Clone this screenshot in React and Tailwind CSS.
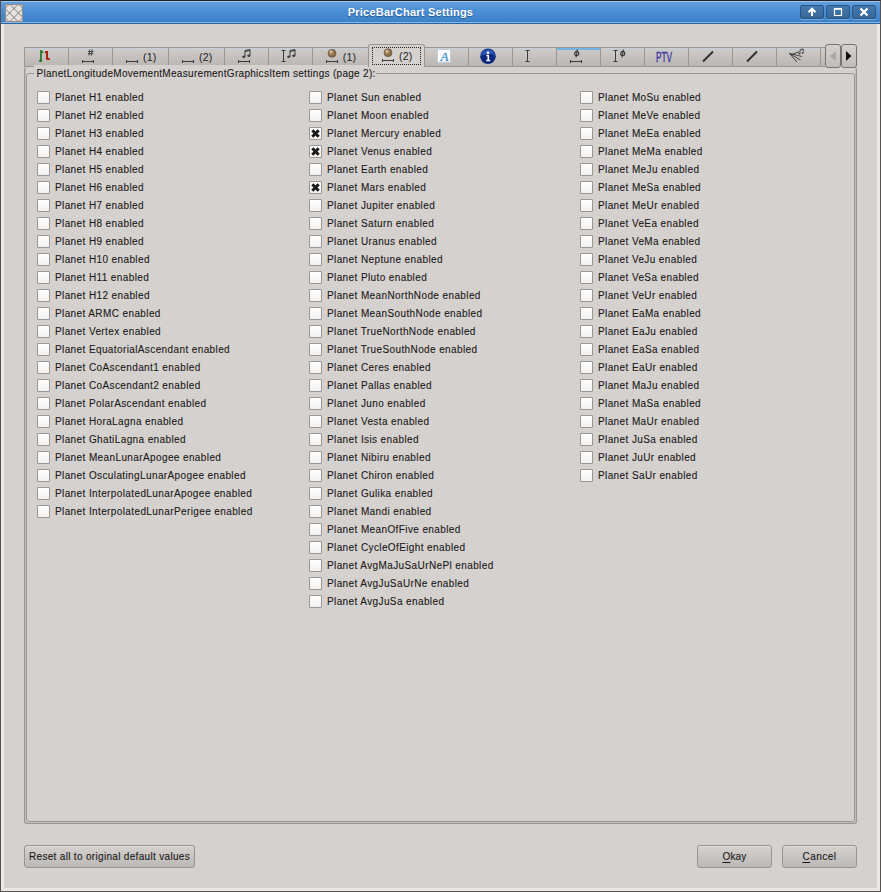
import React from 'react';

const planetColumns = [
  ['H1', 'H2', 'H3', 'H4', 'H5', 'H6', 'H7', 'H8', 'H9', 'H10', 'H11', 'H12', 'ARMC', 'Vertex', 'EquatorialAscendant', 'CoAscendant1', 'CoAscendant2', 'PolarAscendant', 'HoraLagna', 'GhatiLagna', 'MeanLunarApogee', 'OsculatingLunarApogee', 'InterpolatedLunarApogee', 'InterpolatedLunarPerigee'],
  ['Sun', 'Moon', 'Mercury', 'Venus', 'Earth', 'Mars', 'Jupiter', 'Saturn', 'Uranus', 'Neptune', 'Pluto', 'MeanNorthNode', 'MeanSouthNode', 'TrueNorthNode', 'TrueSouthNode', 'Ceres', 'Pallas', 'Juno', 'Vesta', 'Isis', 'Nibiru', 'Chiron', 'Gulika', 'Mandi', 'MeanOfFive', 'CycleOfEight', 'AvgMaJuSaUrNePl', 'AvgJuSaUrNe', 'AvgJuSa'],
  ['MoSu', 'MeVe', 'MeEa', 'MeMa', 'MeJu', 'MeSa', 'MeUr', 'VeEa', 'VeMa', 'VeJu', 'VeSa', 'VeUr', 'EaMa', 'EaJu', 'EaSa', 'EaUr', 'MaJu', 'MaSa', 'MaUr', 'JuSa', 'JuUr', 'SaUr'],
];

const enabledPlanets = new Set(['Mercury', 'Venus', 'Mars']);

function PlanetRow({ name }) {
  return (
    <label className="flex h-[18px] items-center whitespace-nowrap">
      <span className="mb-[2px] flex size-[13px] shrink-0 items-center justify-center rounded-[1px] border border-[#9a9693] bg-linear-to-b from-white to-[#f1f0ef]">
        {enabledPlanets.has(name) && (
          <svg width="11" height="11" viewBox="0 0 11 11" className="shrink-0">
            <path d="M2.3 2.3L8.7 8.7M8.7 2.3L2.3 8.7" stroke="#1c1b1a" strokeWidth="3" />
          </svg>
        )}
      </span>
      <span className="ml-[5px]">Planet {name} enabled</span>
    </label>
  );
}

const ink = '#3c3b3a';

function Measure({ x = 13, y = 13.5 }) {
  return <path d={`M${x + 0.5} ${y - 1.5}v3M${x + 11.5} ${y - 1.5}v3M${x} ${y}h12`} stroke={ink} strokeWidth="1" fill="none" />;
}

function Notes({ x, y }) {
  return (
    <g transform={`translate(${x} ${y})`} fill={ink} stroke={ink}>
      <path d="M2.5 7.5V1.5L7.5 .5V6.5M2.5 2.5L7.5 1.5" fill="none" />
      <ellipse cx="1.3" cy="7.8" rx="1.2" ry=".8" />
      <ellipse cx="6.3" cy="6.8" rx="1.2" ry=".8" />
    </g>
  );
}

function IBeam({ x }) {
  return <path d={`M${x - 1.5} 2.5h4M${x - 1.5} 13.5h4M${x + 0.5} 2.5v11`} stroke={ink} strokeWidth="1" fill="none" />;
}

function Phi({ x, y }) {
  return (
    <g fill="none" stroke={ink}>
      <ellipse cx={x} cy={y} rx="2" ry="2.2" strokeWidth="1.2" />
      <path d={`M${x + 0.7} ${y - 4}L${x - 0.7} ${y + 4}`} strokeWidth="1.1" />
    </g>
  );
}

function Planet({ x, y }) {
  return (
    <g>
      <circle cx={x} cy={y} r="4" fill="#806446" stroke="#66543f" strokeWidth=".6" />
      <circle cx={x - 0.6} cy={y - 0.6} r="2.7" fill="#a58359" />
      <circle cx={x - 1} cy={y - 1.5} r="1.2" fill="#dcc9a8" />
    </g>
  );
}

function PageNumber({ x, y = 12.5, n }) {
  return <text x={x} y={y} fontSize="10.5" letterSpacing=".2" fill="#222">({n})</text>;
}

const tabs = [
  { w: 44, art: <><path d="M16 2v12M14 12.7h2M16 4h2.5" stroke="#17701d" strokeWidth="1.6" fill="none" /><path d="M22 3v8.5M20 4.2h2M22 11h2.7" stroke="#ad2014" strokeWidth="2" fill="none" /></> },
  { w: 44, art: <><path d="M20.8 1.5l-.8 6M23.2 1.5l-.8 6M19 3.5h5.5M18.8 5.7h5.5" stroke={ink} strokeWidth=".9" /><Measure /></> },
  { w: 56, art: <><Measure /><PageNumber x={30} n={1} /></> },
  { w: 56, art: <><Measure /><PageNumber x={30} n={2} /></> },
  { w: 44, art: <><Notes x={17.5} y={1} /><Measure /></> },
  { w: 44, art: <><IBeam x={14} /><Notes x={18.5} y={1} /></> },
  { w: 56, art: <><Planet x={19} y={5.3} /><Measure /><PageNumber x={29.8} n={1} /></> },
  { w: 56, selected: true },
  { w: 45, art: <><rect x="13.5" y="1.5" width="13" height="13" fill="#fbfcfd" stroke="#c6ccd2" /><text x="16.5" y="12.7" fontFamily="Liberation Serif, serif" fontStyle="italic" fontSize="13" fill="#4b93cb" stroke="#4b93cb" strokeWidth=".3">A</text></> },
  { w: 44, art: <><circle cx="19" cy="8.2" r="7.8" fill="#0c277c" /><path d="M12 8a7 6.8 0 0 1 14 0c-4-3-10-2-14 0" fill="#2757b8" /><circle cx="19" cy="4.8" r="1.3" fill="white" /><path d="M17.3 7.5h2v5.2M17.2 12.5h4" stroke="white" strokeWidth="1.6" fill="none" /></> },
  { w: 44, art: <IBeam x={14} /> },
  { w: 44, hot: true, art: <><Phi x={19.7} y={5.5} /><Measure /></> },
  { w: 44, art: <><IBeam x={14} /><Phi x={21.7} y={5.5} /></> },
  { w: 44, art: <text x="11" y="13.5" fontSize="14" textLength="16" letterSpacing="0" lengthAdjust="spacingAndGlyphs" fill="#4038a4" stroke="#4038a4" strokeWidth=".4">PTV</text> },
  { w: 44, art: <path d="M14 13.5L24 3.5" stroke="#302f2e" strokeWidth="1.9" /> },
  { w: 44, art: <path d="M14 13.5L24 3.5" stroke="#302f2e" strokeWidth="1.9" /> },
  { w: 44, art: <><path d="M12.5 5.5L25 8.5M12.5 5.5L23.5 12M12.5 5.5L20 14M14 6.8L22.5 3.5" stroke={ink} strokeWidth=".95" fill="none" /><g transform="translate(21.5 .5) scale(.65)"><Notes x={0} y={0} /></g></> },
  { w: 5, art: null },
];

function Tab({ tab }) {
  if (tab.selected) {
    return (
      <div className="z-10 -mr-px -ml-px flex h-[23px] w-[57px] shrink-0 justify-center rounded-t-[3px] border border-b-0 border-[#9a9693] bg-[#d5d1ce] pt-[2px]">
        <div className="h-[18px] w-[49px] border border-dotted border-[#222]">
          <svg width="47" height="16" viewBox="0 0 47 16" className="block">
            <Planet x={15} y={4.7} />
            <Measure x={9} y={12.5} />
            <PageNumber x={26} y={12} n={2} />
          </svg>
        </div>
      </div>
    );
  }
  return (
    <div
      className={
        'h-5 shrink-0 overflow-hidden border-y border-r border-[#9a9693] bg-linear-to-b from-[#cfcbc8] to-[#b9b6b3] ' +
        (tab.hot ? 'shadow-[inset_0_2px_0_#70b5df]' : 'shadow-[inset_0_1px_0_#c5d0da]')
      }
      style={{ width: tab.w }}
    >
      <svg width="56" height="18" viewBox="0 0 56 18" className="block">
        {tab.art}
      </svg>
    </div>
  );
}

function WindowButton({ children }) {
  return (
    <div className="flex h-[14px] w-6 items-center justify-center rounded-[2px] border border-[#295785] bg-linear-to-b from-[#447bb0] to-[#386695] shadow-[0_1px_0_#75ace0]">
      <svg width="12" height="12" viewBox="0 0 12 12" fill="none" stroke="white" className="shrink-0">{children}</svg>
    </div>
  );
}

function PushButton({ className, children }) {
  return (
    <button className={'h-[23px] rounded-[3px] border border-[#989491] bg-linear-to-b from-[#d4d1ce] to-[#bbb8b5] text-center whitespace-nowrap shadow-[inset_0_1px_0_#e0deda] ' + className}>
      {children}
    </button>
  );
}

export default function App() {
  return (
    <div className="flex h-[892px] w-[881px] flex-col overflow-hidden border border-[#555352] border-t-[#242222] bg-[#d5d1ce] font-['Liberation_Sans',Arial,sans-serif] text-[10px] leading-[18px] tracking-[0.39px] text-[#1a1918] [-webkit-text-stroke:0.1px]">
      <header className="flex h-[23px] shrink-0 items-center border-b border-[#2d65a3] bg-linear-to-b from-[#659fdd] via-[#478dd6] to-[#3d80c4] px-1 shadow-[inset_0_1px_0_#9bc4ee,inset_0_-1px_0_#82b7eb]">
        <svg width="18" height="18" viewBox="0 0 18 18" className="mt-px">
          <rect width="18" height="18" fill="#e6e2df" />
          <path d="M0 4.5L4.5 0M0 13.5L13.5 0M4.5 18L18 4.5M13.5 18L18 13.5M4.5 0L18 13.5M13.5 0L18 4.5M0 4.5L13.5 18M0 13.5L4.5 18" stroke="#5f5a57" strokeWidth=".75" />
          <rect x=".5" y=".5" width="17" height="17" fill="none" stroke="#948d86" />
        </svg>
        <h1 className="w-[776px] text-center text-[11px] font-bold tracking-[0.23px] text-white [-webkit-text-stroke:0] [text-shadow:0_1px_1px_#24598d]">PriceBarChart Settings</h1>
        <div className="ml-[2px] flex gap-[2px]">
          <WindowButton><path d="M6 10V3M2.5 6.2L6 2.7l3.5 3.5" strokeWidth="2" /></WindowButton>
          <WindowButton><path d="M2.5 3h7v6.5h-7z" strokeWidth="1.2" /><path d="M2 2.8h8" strokeWidth="1.6" /></WindowButton>
          <WindowButton><path d="M2.5 2.5l7 7M9.5 2.5l-7 7" strokeWidth="2.2" /></WindowButton>
        </div>
      </header>

      <main className="flex grow flex-col border-r-[3px] border-b-[3px] border-l-[3px] border-[#ebe9e7] pt-[20px] pr-[19px] pl-[20px]">
        <div className="flex h-[23px] shrink-0 items-end">
          <div className="flex h-[23px] w-[801px] items-end overflow-hidden">
            <div className="h-5 w-px shrink-0 bg-[#9a9693]" />
            {tabs.map((tab, i) => <Tab key={i} tab={tab} />)}
          </div>
          <div className="z-10 -mb-px flex h-6 shrink-0">
            {['left', 'right'].map((dir) => (
              <div key={dir} className="flex w-4 items-center justify-center rounded-[3px] border border-[#777471] bg-linear-to-b from-[#d4d1ce] to-[#c0bdba]">
                <svg width="6" height="10" viewBox="0 0 6 10">
                  {dir === 'left' ? <path d="M6 0v10L0 5z" fill="#aaa7a4" /> : <path d="M0 0v10l5.5-5z" fill="#111" />}
                </svg>
              </div>
            ))}
          </div>
        </div>

        <section className="h-[757px] w-[833px] shrink-0 rounded-[3px] border border-t-0 border-[#9a9693] bg-[#c1bdba] p-px pt-0">
          <div className="h-full rounded-b-[2px] bg-[#d5d1ce] pt-[6px]">
            <fieldset className="h-[749px] rounded-[3px] border border-[#9a9693]">
              <div className="-mt-[9px] ml-[7px] h-[18px] w-[342px] bg-[#d5d1ce] pl-[2.5px] tracking-[0.3px] whitespace-nowrap">
                PlanetLongitudeMovementMeasurementGraphicsItem settings (page 2):
              </div>
              <div className="mt-[6px] grid grid-cols-[272px_271px_260px] pl-[10px]">
                {planetColumns.map((column) => (
                  <div key={column[0]}>
                    {column.map((name) => <PlanetRow key={name} name={name} />)}
                  </div>
                ))}
              </div>
            </fieldset>
          </div>
        </section>

        <footer className="mt-[21px] flex w-[833px]">
          <PushButton className="w-[171px] tracking-[0.32px]">Reset all to original default values</PushButton>
          <PushButton className="ml-auto w-[75px] tracking-[0.2px]"><span className="underline underline-offset-2">O</span>kay</PushButton>
          <PushButton className="ml-[10px] w-[75px] tracking-[0.5px]"><span className="underline underline-offset-2">C</span>ancel</PushButton>
        </footer>
      </main>
    </div>
  );
}
